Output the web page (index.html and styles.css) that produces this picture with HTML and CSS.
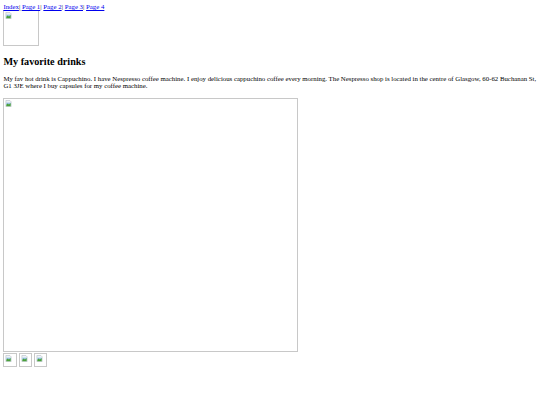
FILE: index.html
```html
<!DOCTYPE html>
<html lang="en">
<head>
  <meta charset="UTF-8">
  <title>My favorite drinks</title>
  <link rel="stylesheet" href="styles.css">
</head>
<body>
  <div class="nav">
    <a href="#">Index</a>| <a href="#">Page 1</a>| <a href="#">Page 2</a>| <a href="#">Page 3</a>| <a href="#">Page 4</a>
  </div>

  <div class="pic logo">
    <svg class="missing" viewBox="0 0 16 16"><path d="M2 1h9l3 3v11H2z" fill="#eef2f6" stroke="#9aa6b2"/><path d="M3 6h10v5H3z" fill="#9cc3e8"/><path d="M3 11l3-3 3 2 4-3v7H3z" fill="#4aa03a"/></svg>
  </div>

  <h2>My favorite drinks</h2>

  <p>My fav hot drink is Cappuchino. I have Nespresso coffee machine. I enjoy delicious cappuchino coffee every morning. The Nespresso shop is located in the centre of Glasgow, 60-62 Buchanan St, G1 3JE where I buy capsules for my coffee machine.</p>

  <div class="pic big">
    <svg class="missing" viewBox="0 0 16 16"><path d="M2 1h9l3 3v11H2z" fill="#eef2f6" stroke="#9aa6b2"/><path d="M3 6h10v5H3z" fill="#9cc3e8"/><path d="M3 11l3-3 3 2 4-3v7H3z" fill="#4aa03a"/></svg>
  </div>

  <div class="thumbs">
    <div class="pic thumb">
      <svg class="missing" viewBox="0 0 16 16"><path d="M2 1h9l3 3v11H2z" fill="#eef2f6" stroke="#9aa6b2"/><path d="M3 6h10v5H3z" fill="#9cc3e8"/><path d="M3 11l3-3 3 2 4-3v7H3z" fill="#4aa03a"/></svg>
    </div>
    <div class="pic thumb">
      <svg class="missing" viewBox="0 0 16 16"><path d="M2 1h9l3 3v11H2z" fill="#eef2f6" stroke="#9aa6b2"/><path d="M3 6h10v5H3z" fill="#9cc3e8"/><path d="M3 11l3-3 3 2 4-3v7H3z" fill="#4aa03a"/></svg>
    </div>
    <div class="pic thumb">
      <svg class="missing" viewBox="0 0 16 16"><path d="M2 1h9l3 3v11H2z" fill="#eef2f6" stroke="#9aa6b2"/><path d="M3 6h10v5H3z" fill="#9cc3e8"/><path d="M3 11l3-3 3 2 4-3v7H3z" fill="#4aa03a"/></svg>
    </div>
  </div>
</body>
</html>
```

FILE: styles.css
```css
body {
  margin: 3px 3.4px;
  font-family: "Liberation Serif", "Times New Roman", serif;
  font-size: 6.8px;
  color: #000;
  background: #fff;
}
a {
  color: #0000ee;
}
.nav {
  line-height: 7px;
}
h2 {
  font-size: 10.2px;
  margin: 10px 0 8.4px;
}
p {
  margin: 7.5px 0 9px;
}
.pic {
  box-sizing: border-box;
  border: 1px solid #c8c8c8;
  padding: 1px;
}
.missing {
  display: block;
  width: 7px;
  height: 7px;
}
.logo {
  width: 36px;
  height: 36px;
}
.big {
  width: 295px;
  height: 254px;
}
.thumbs {
  display: flex;
  gap: 1.7px;
  margin-top: 1px;
}
.thumb {
  width: 13.5px;
  height: 13.5px;
}
```
